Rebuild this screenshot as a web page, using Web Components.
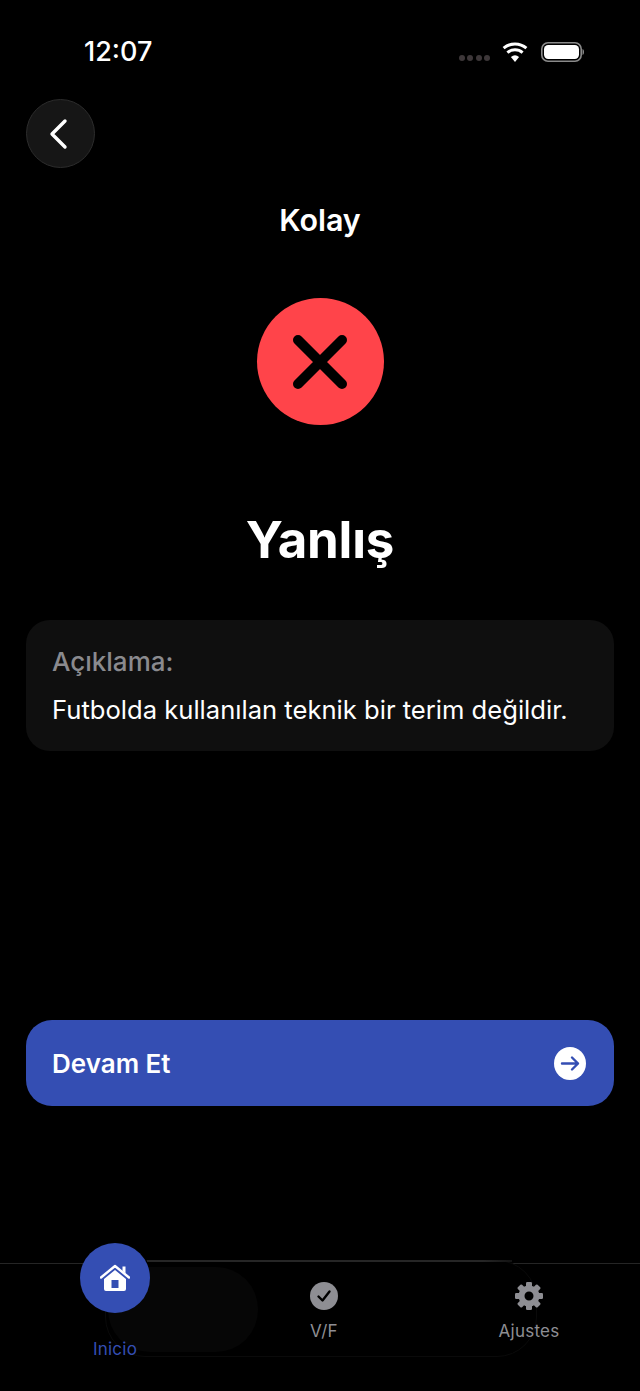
<!DOCTYPE html>
<html lang="tr">
<head>
<meta charset="utf-8">
<title>Kolay</title>
<style>
  html, body { margin: 0; background: #000; }
  body { width: 640px; height: 1391px; overflow: hidden; font-family: Inter, "Noto Sans", sans-serif; color: #fff; }
  quiz-result { display: block; }
</style>
</head>
<body>
<quiz-result>
  <status-bar time="12:07"></status-bar>
  <back-button></back-button>
  <result-header level="Kolay" title="Yanlış"></result-header>
  <explain-card label="Açıklama:">Futbolda kullanılan teknik bir terim değildir.</explain-card>
  <next-button>Devam Et</next-button>
  <tab-bar>
    <tab-item label="Inicio" icon="home" active></tab-item>
    <tab-item label="V/F" icon="check"></tab-item>
    <tab-item label="Ajustes" icon="gear"></tab-item>
  </tab-bar>
</quiz-result>

<script>
class QuizResult extends HTMLElement {
  constructor() {
    super()
    this.attachShadow({ mode: 'open' })
    this.shadowRoot.innerHTML = `
      <style>
        :host { display: flex; flex-direction: column; height: 1391px; }
      </style>
      <slot></slot>
    `
  }
}

class StatusBar extends HTMLElement {
  constructor() {
    super()
    this.attachShadow({ mode: 'open' })
  }
  connectedCallback() {
    this.shadowRoot.innerHTML = `
      <style>
        :host { display: flex; align-items: center; height: 40px; margin-top: 32px; padding: 0 56px 0 84px; }
        .time { font-size: 27px; font-weight: 500; line-height: 40px; }
        .right { margin-left: auto; display: flex; align-items: center; }
        .dots { display: flex; gap: 2.5px; margin: 12px 12px 0 0; }
        .dots i { width: 6px; height: 6px; border-radius: 50%; background: #3d3739; }
        .wifi { display: block; margin-right: 13px; }
        .bat { display: block; }
      </style>
      <span class="time">${this.getAttribute('time')}</span>
      <div class="right">
        <div class="dots"><i></i><i></i><i></i><i></i></div>
        <svg class="wifi" width="26" height="20" viewBox="0 0 26 20">
          <path d="M13 20 L8.9 14.9 A6.6 6.6 0 0 1 17.1 14.9 Z" fill="#fff"/>
          <path d="M5.4 10.6 A11.6 11.6 0 0 1 20.6 10.6" fill="none" stroke="#fff" stroke-width="3"/>
          <path d="M1.6 6.2 A17.4 17.4 0 0 1 24.4 6.2" fill="none" stroke="#fff" stroke-width="3"/>
        </svg>
        <svg class="bat" width="43" height="20" viewBox="0 0 43 20">
          <rect x="0.8" y="0.8" width="39.4" height="18.4" rx="6.2" fill="none" stroke="#8a8a8a" stroke-width="1.6"/>
          <rect x="3" y="3" width="35" height="14" rx="4.2" fill="#fff"/>
          <path d="M41.5 7 C42.8 7.6 43 8.6 43 10 C43 11.4 42.8 12.4 41.5 13 Z" fill="#8a8a8a"/>
        </svg>
      </div>
    `
  }
}

class BackButton extends HTMLElement {
  constructor() {
    super()
    this.attachShadow({ mode: 'open' })
    this.shadowRoot.innerHTML = `
      <style>
        :host {
          display: flex; align-items: center; justify-content: center;
          box-sizing: border-box; width: 69px; height: 69px;
          margin: 27px 0 0 26px; border-radius: 50%;
          background: #161616; border: 1px solid #2c2c2c;
        }
        svg { display: block; margin-left: -4px; }
      </style>
      <svg width="22" height="34" viewBox="0 0 22 34">
        <path d="M17 4 L4 17 L17 30" fill="none" stroke="#fff" stroke-width="3.4" stroke-linecap="round" stroke-linejoin="round"/>
      </svg>
    `
  }
}

class ResultHeader extends HTMLElement {
  constructor() {
    super()
    this.attachShadow({ mode: 'open' })
  }
  connectedCallback() {
    this.shadowRoot.innerHTML = `
      <style>
        :host { display: flex; flex-direction: column; align-items: center; }
        .level { margin-top: 32px; font-size: 30.4px; font-weight: 600; line-height: 40px; }
        .mark {
          display: flex; align-items: center; justify-content: center;
          width: 127px; height: 127px; margin-top: 58px;
          border-radius: 50%; background: #ff444a;
        }
        .mark svg { display: block; }
        h1 { margin: 82px 0 0; font-size: 51px; font-weight: 700; line-height: 66px; letter-spacing: -0.2px; }
      </style>
      <div class="level">${this.getAttribute('level')}</div>
      <div class="mark">
        <svg width="56" height="56" viewBox="0 0 56 56">
          <path d="M6 6 L50 50 M50 6 L6 50" stroke="#000" stroke-width="10" stroke-linecap="round"/>
        </svg>
      </div>
      <h1>${this.getAttribute('title')}</h1>
    `
  }
}

class ExplainCard extends HTMLElement {
  constructor() {
    super()
    this.attachShadow({ mode: 'open' })
  }
  connectedCallback() {
    this.shadowRoot.innerHTML = `
      <style>
        :host {
          display: flex; flex-direction: column; gap: 16px;
          box-sizing: border-box; height: 131px;
          margin: 47px 26px 0; padding: 26px 26px 0;
          border-radius: 24px; background: #0f0f0f;
        }
        .label { font-size: 26px; font-weight: 500; line-height: 32px; color: #8a8a8e; }
        .text { font-size: 25.6px; font-weight: 400; line-height: 32px; color: #fff; white-space: nowrap; }
      </style>
      <div class="label">${this.getAttribute('label')}</div>
      <div class="text"><slot></slot></div>
    `
  }
}

class NextButton extends HTMLElement {
  constructor() {
    super()
    this.attachShadow({ mode: 'open' })
    this.shadowRoot.innerHTML = `
      <style>
        :host {
          display: flex; align-items: center; justify-content: space-between;
          box-sizing: border-box; height: 86px;
          margin: 269px 26px 0; padding: 0 28px 0 26px;
          border-radius: 26px; background: #344eb3;
          font-size: 26px; font-weight: 600; color: #fff;
        }
        svg { display: block; }
      </style>
      <slot></slot>
      <svg width="32" height="33" viewBox="0 0 32 33">
        <ellipse cx="16" cy="16.5" rx="16" ry="16.5" fill="#fff"/>
        <path d="M8 16.5 H24 M18 10.5 L24 16.5 L18 22.5" fill="none" stroke="#344eb3" stroke-width="2.4" stroke-linecap="round" stroke-linejoin="round"/>
      </svg>
    `
  }
}

class TabBar extends HTMLElement {
  constructor() {
    super()
    this.attachShadow({ mode: 'open' })
    this.shadowRoot.innerHTML = `
      <style>
        :host {
          display: grid; grid-template-columns: 230px 188px 222px;
          position: relative; box-sizing: border-box;
          height: 128px; margin-top: 157px;
          border-top: 1px solid #252525;
        }
        /* faint leftovers of the floating bar behind the tabs */
        .ghost {
          position: absolute; left: 105px; top: -4px; width: 432px; height: 97px;
          box-sizing: border-box; border-radius: 40px;
          border: 1px solid #0a0a0a;
          background: #000;
        }
        .edge {
          position: absolute; left: 147px; top: -4px; width: 365px; height: 2px;
          background: linear-gradient(90deg, #262626 92%, #131313);
        }
        .pill {
          position: absolute; left: 108px; top: 3px; width: 150px; height: 85px;
          border-radius: 42px; background: #060606;
        }
        ::slotted(tab-item) { position: relative; }
      </style>
      <div class="ghost"></div>
      <div class="edge"></div>
      <div class="pill"></div>
      <slot></slot>
    `
  }
}

// teeth of the gear: one rect, turned eight times
const gearTeeth = [0, 45, 90, 135, 180, 225, 270, 315]
  .map(a => `<rect x="11" y="0" width="6" height="7" rx="1.2" fill="#8e8e93" transform="rotate(${a} 14 14)"/>`)
  .join('')

const ICONS = {
  home: `<svg width="30" height="28" viewBox="0 0 30 28">
      <path d="M1 13.5 L15 2 L29 13.5" fill="none" stroke="#fff" stroke-width="2.4" stroke-linecap="round" stroke-linejoin="round"/>
      <path d="M22.5 2.5 H25.5 V9.5 L22.5 7 Z" fill="#fff"/>
      <path fill-rule="evenodd" d="M15 6 L26 15 V25 Q26 27 24 27 H6 Q4 27 4 25 V15 Z M11.5 16 V24 H18.5 V16 Z" fill="#fff"/>
    </svg>`,
  check: `<svg width="28" height="28" viewBox="0 0 28 28">
      <circle cx="14" cy="14" r="14" fill="#8e8e93"/>
      <path d="M8.5 14.5 L12.5 18.5 L19.5 9.5" fill="none" stroke="#000" stroke-width="2.4" stroke-linecap="round" stroke-linejoin="round"/>
    </svg>`,
  gear: `<svg width="28" height="28" viewBox="0 0 28 28">
      ${gearTeeth}
      <circle cx="14" cy="14" r="7.5" fill="none" stroke="#8e8e93" stroke-width="6"/>
    </svg>`
}

class TabItem extends HTMLElement {
  constructor() {
    super()
    this.attachShadow({ mode: 'open' })
  }
  connectedCallback() {
    const active = this.hasAttribute('active')
    this.shadowRoot.innerHTML = `
      <style>
        :host { display: flex; flex-direction: column; align-items: center; }
        .icon { display: flex; align-items: center; justify-content: center; height: 28px; margin-top: 18px; }
        .icon.on {
          width: 70px; height: 70px; margin-top: -21px;
          border-radius: 50%; background: #344eb3;
        }
        svg { display: block; }
        span { margin-top: 9px; font-size: 17px; line-height: 24px; letter-spacing: 0.25px; color: #8e8e93; }
        .icon.on + span { margin-top: 24px; color: #344eb3; }
      </style>
      <div class="icon ${active ? 'on' : ''}">${ICONS[this.getAttribute('icon')]}</div>
      <span>${this.getAttribute('label')}</span>
    `
  }
}

customElements.define('quiz-result', QuizResult)
customElements.define('status-bar', StatusBar)
customElements.define('back-button', BackButton)
customElements.define('result-header', ResultHeader)
customElements.define('explain-card', ExplainCard)
customElements.define('next-button', NextButton)
customElements.define('tab-bar', TabBar)
customElements.define('tab-item', TabItem)
</script>
</body>
</html>
